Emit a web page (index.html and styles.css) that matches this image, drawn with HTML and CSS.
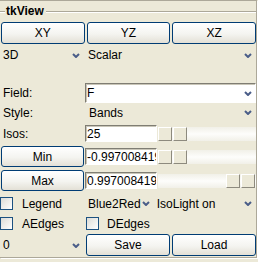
FILE: index.html
```html
<!DOCTYPE html>
<html lang="en">
<head>
  <meta charset="UTF-8" />
  <title>tkView</title>
  <link rel="stylesheet" href="styles.css">
</head>
<body>
  <div class="frame">
    <div class="frame-title">
      <span class="line short"></span>
      <span class="title">tkView</span>
      <span class="line"></span>
    </div>

    <div class="view-buttons">
      <button class="btn">XY</button>
      <button class="btn">YZ</button>
      <button class="btn">XZ</button>
    </div>

    <div class="row row-menus">
      <div class="menu menu-small"><span>3D</span><svg class="chev" width="8" height="5"><polyline points="1,1 4,4 7,1"/></svg></div>
      <div class="menu menu-wide"><span>Scalar</span><svg class="chev" width="8" height="5"><polyline points="1,1 4,4 7,1"/></svg></div>
    </div>

    <div class="row row-field">
      <label class="label">Field:</label>
      <div class="combo entry">
        <input type="text" value="F" />
        <svg class="chev" width="8" height="5"><polyline points="1,1 4,4 7,1"/></svg>
      </div>
    </div>

    <div class="row row-style">
      <span class="label">Style:</span>
      <div class="menu menu-wide"><span>Bands</span><svg class="chev" width="8" height="5"><polyline points="1,1 4,4 7,1"/></svg></div>
    </div>

    <div class="row row-isos">
      <label class="label">Isos:</label>
      <input class="entry value" type="text" value="25" />
      <div class="slider"><span class="thumb"></span><span class="thumb"></span></div>
    </div>

    <div class="row row-min">
      <button class="btn side-btn">Min</button>
      <input class="entry value" type="text" value="-0.997008419" />
      <div class="slider"><span class="thumb"></span><span class="thumb"></span></div>
    </div>

    <div class="row row-max">
      <button class="btn side-btn">Max</button>
      <input class="entry value" type="text" value="0.997008419" />
      <div class="slider at-end"><span class="thumb"></span><span class="thumb"></span></div>
    </div>

    <div class="row row-legend">
      <div class="check-cell"><span class="check"></span><span>Legend</span></div>
      <div class="menu"><span>Blue2Red</span><svg class="chev" width="8" height="5"><polyline points="1,1 4,4 7,1"/></svg></div>
      <div class="menu menu-fill"><span>IsoLight on</span><svg class="chev" width="8" height="5"><polyline points="1,1 4,4 7,1"/></svg></div>
    </div>

    <div class="row row-edges">
      <div class="check-cell"><span class="check"></span><span>AEdges</span></div>
      <div class="check-cell second"><span class="check"></span><span>DEdges</span></div>
    </div>

    <div class="bottom-row">
      <div class="menu"><span>0</span><svg class="chev" width="8" height="5"><polyline points="1,1 4,4 7,1"/></svg></div>
      <button class="btn">Save</button>
      <button class="btn">Load</button>
    </div>
  </div>
</body>
</html>
```

FILE: styles.css
```css
body {
  margin: 0;
  width: 258px;
  height: 262px;
  overflow: hidden;
  background-color: #ece9d8;
  font-family: "Liberation Sans", Arial, sans-serif;
  font-size: 12px;
  color: #000;
}

.frame {
  width: 256px;
  padding-bottom: 1px;
  border-right: 1px solid #aca899;
  border-bottom: 1px solid #aca899;
  box-shadow: 1px 1px 0 #fff;
}

.frame-title {
  display: flex;
  height: 21px;
  border-top: 1px solid #aca899;
}

.frame-title .line {
  flex: 1;
  height: 1px;
  margin-top: 10px;
  background-color: #aca899;
  border-bottom: 1px solid #fff;
}

.frame-title .line.short {
  flex: none;
  width: 5px;
}

.title {
  font-weight: bold;
  line-height: 14px;
  margin: 3px 2px 0 1px;
}

.btn {
  font-family: inherit;
  font-size: 12px;
  color: #000;
  padding: 0;
  border: 1px solid #003c74;
  border-radius: 3px;
  background: linear-gradient(#ffffff, #f4f4f0 55%, #e3e0d6);
}

.view-buttons {
  display: grid;
  grid-template-columns: 1fr 1fr 1fr;
  gap: 2px;
  height: 22px;
  padding-left: 1px;
}

.row {
  display: flex;
  align-items: center;
}

.label {
  width: 85px;
  flex: none;
  padding-left: 3px;
  box-sizing: border-box;
}

.menu {
  display: flex;
  align-items: center;
  gap: 1px;
  padding: 0 4px 0 3px;
}

.menu-small {
  width: 84px;
  box-sizing: border-box;
  justify-content: space-between;
}

.menu-wide,
.menu-fill {
  flex: 1;
  justify-content: space-between;
}

.menu-wide {
  padding-left: 4px;
}

.chev {
  flex: none;
  fill: none;
  stroke: #4a5d88;
  stroke-width: 2;
}

.row-menus {
  height: 22px;
  margin-bottom: 17px;
}

.entry {
  height: 18px;
  box-sizing: border-box;
  border: 1px solid;
  border-color: #7f7d73 #fff #fff #7f7d73;
  box-shadow: inset 1px 1px 0 #c9c6b8;
  background-color: #fff;
}

.entry input,
input.value {
  font-family: inherit;
  font-size: 12px;
  color: #000;
  padding: 0 0 0 1px;
  outline: none;
}

.row-field {
  height: 20px;
}

.combo {
  flex: 1;
  height: 20px;
  display: flex;
  align-items: center;
  padding-right: 3px;
}

.combo input {
  flex: 1;
  min-width: 0;
  border: none;
  background: transparent;
}

.row-style {
  height: 19px;
}

.row-isos {
  height: 19px;
  margin-top: 2px;
}

.value {
  width: 72px;
  flex: none;
}

.row-isos .value {
  height: 17px;
}

.slider {
  flex: 1;
  display: flex;
  height: 14px;
  margin-left: 1px;
  background: linear-gradient(#f1f0e8, #fdfdfb 50%, #f1f0e8);
}

.slider.at-end {
  justify-content: flex-end;
}

.thumb {
  width: 12px;
  height: 12px;
  border: 1px solid;
  border-color: #fff #8d8a7e #8d8a7e #fff;
  background-color: #ece9d8;
  margin-right: 1px;
}

.row-min,
.row-max {
  height: 21px;
  margin-top: 3px;
}

.side-btn {
  width: 83px;
  height: 21px;
  margin: 0 1px;
}

.row-min .value,
.row-max .value {
  height: 17px;
}

.row-legend {
  height: 21px;
  margin-top: 2px;
}

.check-cell {
  width: 85px;
  flex: none;
  display: flex;
  align-items: center;
  gap: 9px;
}

.check-cell.second {
  margin-left: 1px;
  gap: 8px;
}

.check {
  width: 11px;
  height: 11px;
  border: 1px solid #1c5180;
  background: linear-gradient(135deg, #dcdcd7, #ffffff);
}

.row-edges {
  height: 19px;
}

.bottom-row {
  display: grid;
  grid-template-columns: 84px 1fr 1fr;
  gap: 2px;
  height: 22px;
  margin-top: 1px;
}

.bottom-row .menu {
  justify-content: space-between;
}
```
